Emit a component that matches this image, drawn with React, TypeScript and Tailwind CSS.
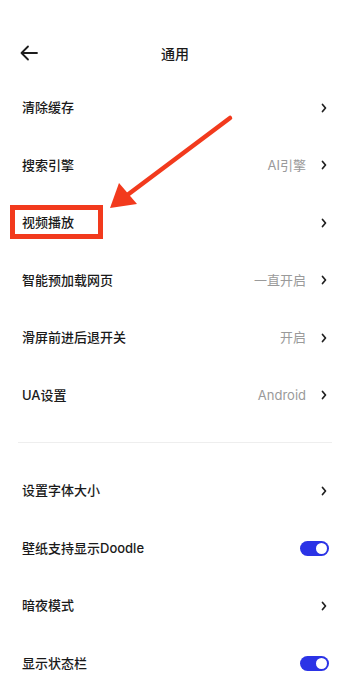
import type { ReactElement } from "react";

type Row =
  | { label: string; kind: "link"; value?: string }
  | { label: string; kind: "toggle"; on: boolean };

const groupA: Row[] = [
  { label: "清除缓存", kind: "link" },
  { label: "搜索引擎", kind: "link", value: "AI引擎" },
  { label: "视频播放", kind: "link" },
  { label: "智能预加载网页", kind: "link", value: "一直开启" },
  { label: "滑屏前进后退开关", kind: "link", value: "开启" },
  { label: "UA设置", kind: "link", value: "Android" },
];

const groupB: Row[] = [
  { label: "设置字体大小", kind: "link" },
  { label: "壁纸支持显示Doodle", kind: "toggle", on: true },
  { label: "暗夜模式", kind: "link" },
  { label: "显示状态栏", kind: "toggle", on: true },
];

function Chevron(): ReactElement {
  return (
    <svg width="6" height="10" viewBox="0 0 6 10" fill="none" className="shrink-0">
      <path d="M1.5 1.5 L4.5 5 L1.5 8.5" stroke="#1f1f1f" strokeWidth="1.7" strokeLinecap="round" strokeLinejoin="round" />
    </svg>
  );
}

function Toggle({ on }: { on: boolean }): ReactElement {
  return (
    <span
      className={`flex h-[15px] w-[29px] items-center rounded-full px-[2px] ${
        on ? "justify-end bg-[#2b33e6]" : "justify-start bg-[#d9d9d9]"
      }`}
    >
      <span className="h-[11px] w-[11px] rounded-full bg-white" />
    </span>
  );
}

function SettingRow({ row }: { row: Row }): ReactElement {
  return (
    <div className="flex h-[57.5px] items-center pl-[22px] pr-[22px]">
      <span className="flex-1 text-[13px] font-medium text-[#1a1a1a]">{row.label}</span>
      {row.kind === "link" ? (
        <div className="flex items-center gap-[15px]">
          {row.value && <span className="text-[13px] text-[#9a9a9a]">{row.value}</span>}
          <span className="mr-[1px]">
            <Chevron />
          </span>
        </div>
      ) : (
        <span className="-mr-[1px]">
          <Toggle on={row.on} />
        </span>
      )}
    </div>
  );
}

export default function App(): ReactElement {
  return (
    <div
      className="relative h-[673px] w-[350px] overflow-hidden bg-white"
      style={{ fontFamily: 'Inter, "Noto Sans CJK SC", sans-serif' }}
    >
      <header className="relative flex h-[79px] items-center justify-center pt-[27px]">
        <svg width="20" height="18" viewBox="0 0 20 18" fill="none" className="absolute left-[19px] top-[44px]">
          <path d="M18 9 H2.5 M9 2.5 L2.5 9 L9 15.5" stroke="#1c1c1c" strokeWidth="1.8" strokeLinecap="round" strokeLinejoin="round" />
        </svg>
        <h1 className="text-[14px] font-medium text-[#1a1a1a]">通用</h1>
      </header>

      <section>
        {groupA.map((row) => (
          <SettingRow key={row.label} row={row} />
        ))}
      </section>

      <div className="mx-[18px] mb-[19px] mt-[18px] h-px bg-[#eeeeee]" />

      <section>
        {groupB.map((row) => (
          <SettingRow key={row.label} row={row} />
        ))}
      </section>

      {/* annotation: red box + arrow */}
      <div className="pointer-events-none absolute left-[10px] top-[205px] h-[34px] w-[93px] border-[5px] border-[#f23a1d]" />
      <svg
        className="pointer-events-none absolute left-0 top-0"
        width="350"
        height="673"
        viewBox="0 0 350 673"
      >
        <line x1="230" y1="118" x2="126" y2="196" stroke="#f23a1d" strokeWidth="4.5" strokeLinecap="round" />
        <polygon points="110,208 119,183 137,204" fill="#f23a1d" />
      </svg>
    </div>
  );
}
